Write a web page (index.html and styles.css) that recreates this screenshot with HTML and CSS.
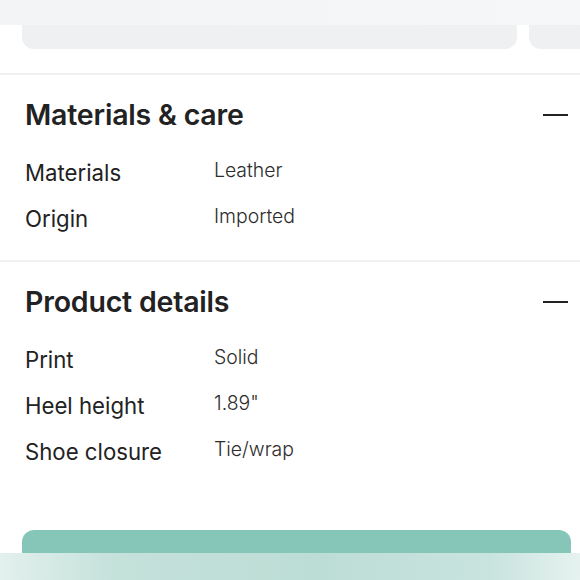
FILE: index.html
```html
<!DOCTYPE html>
<html>
<head>
<meta charset="utf-8">
<link rel="stylesheet" href="styles.css">
</head>
<body>
<div class="page">
  <div class="topband"></div>
  <div class="cards">
    <div class="card card-main"></div>
    <div class="card card-next"></div>
  </div>
  <section class="section first">
    <div class="sec-head">
      <h2>Materials &amp; care</h2>
      <span class="minus"></span>
    </div>
    <dl class="rows">
      <div class="row"><dt>Materials</dt><dd>Leather</dd></div>
      <div class="row"><dt>Origin</dt><dd>Imported</dd></div>
    </dl>
  </section>
  <section class="section">
    <div class="sec-head">
      <h2>Product details</h2>
      <span class="minus"></span>
    </div>
    <dl class="rows">
      <div class="row"><dt>Print</dt><dd>Solid</dd></div>
      <div class="row"><dt>Heel height</dt><dd>1.89"</dd></div>
      <div class="row"><dt>Shoe closure</dt><dd>Tie/wrap</dd></div>
    </dl>
  </section>
  <div class="cta"></div>
  <div class="bottomfade"></div>
</div>
</body>
</html>
```

FILE: styles.css
```css
* { box-sizing: border-box; }
html, body { margin: 0; padding: 0; background: #ffffff; }
body { font-family: Inter, "Noto Sans", sans-serif; color: #222222; }
.page { position: relative; width: 580px; height: 580px; overflow: hidden; }
.topband { height: 25px; background: linear-gradient(90deg, #f3f4f5, #f6f7f8); }
.cards { display: flex; gap: 12px; padding-left: 22px; }
.card { height: 24px; background: #eff0f1; border-radius: 0 0 12px 12px; flex-shrink: 0; }
.card-main { width: 495px; }
.card-next { width: 80px; }
.section { border-top: 2px solid #f1f1f1; padding: 0 12px 0 25px; }
.section.first { margin-top: 24px; }
.sec-head { display: flex; justify-content: space-between; align-items: flex-start; height: 80px; padding-top: 23px; }
.sec-head h2 { margin: 0; font-size: 28.5px; font-weight: 600; letter-spacing: -0.2px; color: #222; line-height: 34px; }
.minus { width: 25px; height: 2px; background: #222; margin-top: 16px; }
.rows { margin: 0; padding: 0 0 13px 0; }
.row { display: flex; height: 46px; align-items: flex-start; }
.row dt { width: 189px; font-size: 22.2px; font-weight: 400; margin: 0; padding-top: 4px; line-height: 27px; }
.row dd { margin: 0; font-size: 19.4px; font-weight: 300; color: #2c2c2c; padding-top: 3px; line-height: 24px; }
.cta { position: absolute; left: 22px; top: 530px; width: 549px; height: 60px; background: #86c6b9; border-radius: 12px; }
.bottomfade { position: absolute; left: 0; top: 553px; width: 580px; height: 27px; background: linear-gradient(90deg, #e3f0ee 0%, #c4e1da 20%, #bcddd5 55%, #c9e4de 85%, #e6f2f0 100%); }
```
